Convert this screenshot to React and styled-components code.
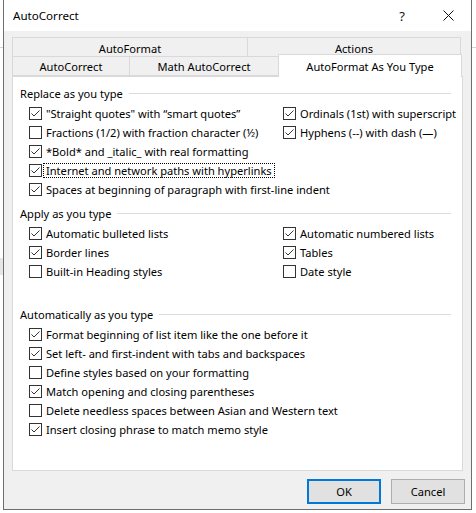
import styled, { createGlobalStyle } from "styled-components"

const GlobalStyle = createGlobalStyle`
    html, body {
        margin: 0;
        padding: 0;
        background: #fff;
    }
    body {
        font-family: 'Noto Sans', 'Open Sans', sans-serif;
        font-size: 11.1px;
        color: #000;
    }
`

const Screen = styled.div`
    display: flex;
    width: 476px;
    height: 513px;
    overflow: hidden;
`

const Sliver = styled.div`
    width: ${p => p.$w}px;
    flex: none;
    display: flex;
    flex-direction: column;
`

const SliverRule = styled.div`
    height: 1px;
    background: #d4d4d4;
    margin: ${p => p.$m || 0};
`

const SliverBlock = styled.div`
    height: ${p => p.$h}px;
    background: ${p => p.$bg || "#e6e6e6"};
    margin-top: ${p => p.$mt || 0}px;
`

const Window = styled.div`
    width: 469px;
    height: 510px;
    flex: none;
    box-sizing: border-box;
    border: 1px solid #6e6e6e;
    border-top: none;
    background: #f0f0f0;
    display: flex;
    flex-direction: column;
`

const TitleBar = styled.div`
    height: 31px;
    background: #fff;
    display: flex;
    align-items: center;
    padding-left: 9px;
`

const TitleText = styled.div`
    flex: 1;
    font-size: 11.6px;
`

const CaptionButton = styled.div`
    width: 46px;
    height: 31px;
    display: flex;
    align-items: center;
    justify-content: center;
    font-size: 13px;
    color: #111;
`

const Body = styled.div`
    flex: 1;
    padding: 7px 8px 0;
    display: flex;
    flex-direction: column;
`

const TabRow = styled.div`
    display: flex;
    align-items: flex-end;
    height: ${p => p.$h}px;
    margin-left: 1px;
    position: relative;
    z-index: ${p => p.$z || 0};
`

const Tab = styled.div`
    width: ${p => p.$w}px;
    height: ${p => p.$h}px;
    box-sizing: border-box;
    border: 1px solid #d9d9d9;
    border-bottom: ${p => (p.$active ? "none" : "1px solid #d9d9d9")};
    margin-left: -1px;
    background: ${p => (p.$active ? "#fff" : "#f0f0f0")};
    display: flex;
    align-items: center;
    justify-content: center;
    padding-top: ${p => p.$pt || 0}px;
    margin-bottom: ${p => (p.$active ? -1 : 0)}px;
    position: relative;
`

const Panel = styled.div`
    width: 451px;
    height: 395px;
    box-sizing: border-box;
    border: 1px solid #d9d9d9;
    background: #fff;
    padding: 8px 7px 0 7px;
    display: flex;
    flex-direction: column;
`

const GroupHeader = styled.div`
    display: flex;
    align-items: center;
    height: 16px;
    margin-top: ${p => p.$mt || 0}px;
    margin-bottom: 3px;
    padding-right: 4px;

    &::after {
        content: "";
        flex: 1;
        height: 1px;
        background: #dcdcdc;
        margin-left: 6px;
    }
`

const Grid = styled.div`
    display: grid;
    grid-template-columns: 254px 1fr;
    grid-auto-rows: 19px;
    padding-left: 9px;
`

const Row = styled.label`
    display: flex;
    align-items: center;
    grid-column: ${p => (p.$wide ? "1 / span 2" : "auto")};
    white-space: nowrap;
`

const Box = styled.span`
    width: 13px;
    height: 13px;
    box-sizing: border-box;
    border: 1px solid #333;
    background: #fff;
    flex: none;
    display: flex;
    align-items: center;
    justify-content: center;
`

const Label = styled.span`
    margin-left: 1px;
    padding: 0 2px;
    line-height: 13px;
    border: 1px dotted ${p => (p.$focus ? "#000" : "transparent")};
`

const Footer = styled.div`
    display: flex;
    justify-content: flex-end;
    gap: 10px;
    padding: 8px 6px 0 0;
    margin-right: -8px;
`

const Button = styled.div`
    width: 74px;
    height: 25px;
    box-sizing: border-box;
    background: #e1e1e1;
    border: ${p => (p.$default ? "2px solid #0078d7" : "1px solid #adadad")};
    display: flex;
    align-items: center;
    justify-content: center;
`

function Check({ on, label, focus, wide }) {
    return (
        <Row $wide={wide}>
            <Box>
                {on && (
                    <svg width="11" height="11" viewBox="0 0 11 11">
                        <polyline points="1.5,5.5 4,8 9.5,2.5" fill="none" stroke="#333" strokeWidth="1" />
                    </svg>
                )}
            </Box>
            <Label $focus={focus}>{label}</Label>
        </Row>
    )
}

export default function App() {
    return (
        <Screen>
            <GlobalStyle />
            <Sliver $w={3}>
                <SliverRule $m="47px 0 0" />
                <SliverBlock $mt={210} $h={17} />
            </Sliver>
            <Window>
                <TitleBar>
                    <TitleText>AutoCorrect</TitleText>
                    <CaptionButton>?</CaptionButton>
                    <CaptionButton>
                        <svg width="11" height="11" viewBox="0 0 11 11">
                            <path d="M0.5 0.5 L10.5 10.5 M10.5 0.5 L0.5 10.5" stroke="#111" strokeWidth="1" />
                        </svg>
                    </CaptionButton>
                </TitleBar>
                <Body>
                    <TabRow $h={19}>
                        <Tab $w={236} $h={20} $pt={2}>AutoFormat</Tab>
                        <Tab $w={214} $h={20} $pt={2}>Actions</Tab>
                    </TabRow>
                    <TabRow $h={19} $z={1}>
                        <Tab $w={118} $h={20}>AutoCorrect</Tab>
                        <Tab $w={150} $h={20}>Math AutoCorrect</Tab>
                        <Tab $w={184} $h={23} $active>AutoFormat As You Type</Tab>
                    </TabRow>
                    <Panel>
                        <GroupHeader>Replace as you type</GroupHeader>
                        <Grid>
                            <Check on label={"\"Straight quotes\" with \u201csmart quotes\u201d"} />
                            <Check on label="Ordinals (1st) with superscript" />
                            <Check label={"Fractions (1/2) with fraction character (\u00bd)"} />
                            <Check on label={"Hyphens (--) with dash (\u2014)"} />
                            <Check wide on label="*Bold* and _italic_ with real formatting" />
                            <Check wide on focus label="Internet and network paths with hyperlinks" />
                            <Check wide on label="Spaces at beginning of paragraph with first-line indent" />
                        </Grid>
                        <GroupHeader $mt={6}>Apply as you type</GroupHeader>
                        <Grid>
                            <Check on label="Automatic bulleted lists" />
                            <Check on label="Automatic numbered lists" />
                            <Check on label="Border lines" />
                            <Check on label="Tables" />
                            <Check label="Built-in Heading styles" />
                            <Check label="Date style" />
                        </Grid>
                        <GroupHeader $mt={25}>Automatically as you type</GroupHeader>
                        <Grid>
                            <Check wide on label="Format beginning of list item like the one before it" />
                            <Check wide on label="Set left- and first-indent with tabs and backspaces" />
                            <Check wide label="Define styles based on your formatting" />
                            <Check wide on label="Match opening and closing parentheses" />
                            <Check wide label="Delete needless spaces between Asian and Western text" />
                            <Check wide on label="Insert closing phrase to match memo style" />
                        </Grid>
                    </Panel>
                    <Footer>
                        <Button $default>OK</Button>
                        <Button>Cancel</Button>
                    </Footer>
                </Body>
            </Window>
            <Sliver $w={5}>
                <SliverRule $m="47px 0 0" />
            </Sliver>
        </Screen>
    )
}
